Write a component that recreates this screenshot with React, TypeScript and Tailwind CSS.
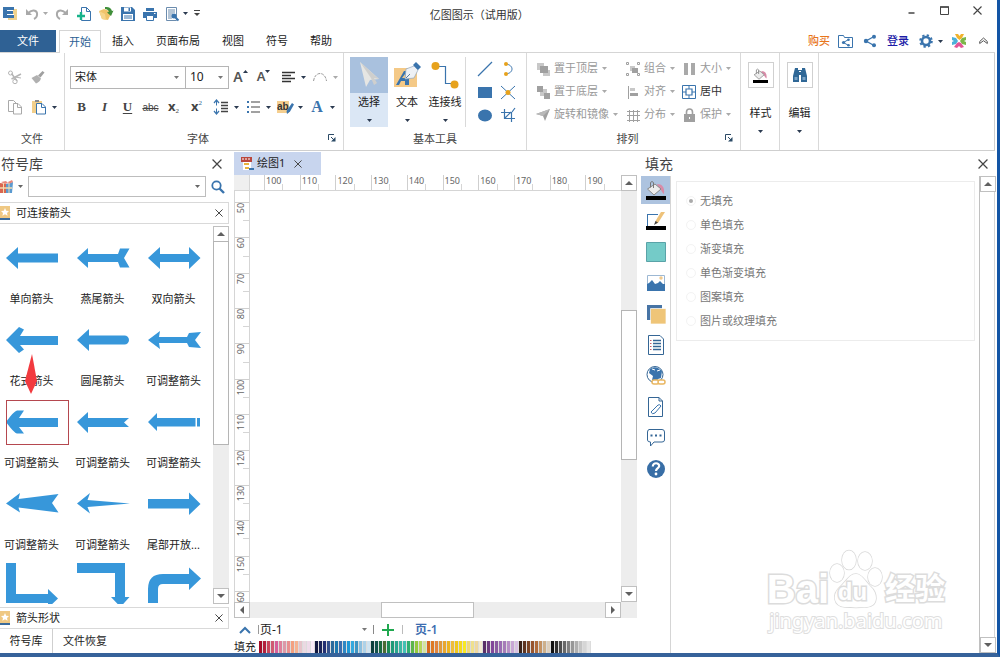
import { useState, type ReactNode } from "react";
import clsx from "clsx";

type IconProps = { w?: number; h?: number; children: ReactNode; className?: string };

function Ico({ w = 16, h = 16, children, className }: IconProps) {
  return (
    <svg width={w} height={h} viewBox={`0 0 ${w} ${h}`} fill="none" className={clsx("shrink-0", className)} aria-hidden="true">
      {children}
    </svg>
  );
}

function Caret({ className = "text-[#2b3a50]" }: { className?: string }) {
  return (
    <Ico w={5} h={3} className={className}>
      <path d="M0 0h5L2.5 3z" fill="currentColor" />
    </Ico>
  );
}

function Close({ size = 9 }: { size?: number }) {
  return (
    <svg width={size} height={size} viewBox="0 0 9 9" fill="none" stroke="#444" strokeWidth="1.1" aria-hidden="true">
      <path d="M.5.5l8 8M8.5.5l-8 8" />
    </svg>
  );
}

function Launcher() {
  return (
    <Ico w={8} h={8}>
      <path d="M.5 6V.5H6" stroke="#2b4a66" />
      <path d="M3 3l3 3" stroke="#2b4a66" />
      <path d="M7.500 3v4.500H3z" fill="#2b4a66" />
    </Ico>
  );
}

const blue = "#3a74ad";

/* ---------- title bar ---------- */

const quickActions = [
  {
    label: "撤销",
    caret: true,
    icon: (
      <>
        <path d="M2 3v6h6z" fill="#a9a9a9" />
        <path d="M4 7.500C7 3.500 12 3.500 13 7c.5 3-1 5-3 6" stroke="#a9a9a9" strokeWidth="2" />
      </>
    ),
  },
  {
    label: "重做",
    icon: (
      <>
        <path d="M14 3v6H8z" fill="#a9a9a9" />
        <path d="M12 7.500C9 3.500 4 3.500 3 7c-.5 3 1 5 3 6" stroke="#a9a9a9" strokeWidth="2" />
      </>
    ),
  },
  {
    label: "新建",
    icon: (
      <>
        <path d="M5.500 1.500h5l4 4v9h-9z" fill="#fff" stroke={blue} />
        <path d="M10.500 1.500v4h4" stroke={blue} />
        <path d="M5 6v8M1 10h8" stroke="#17b38a" strokeWidth="2.400" />
      </>
    ),
  },
  {
    label: "打开",
    icon: (
      <>
        <path d="M1 5l5-2 8 3-4 8-6-1z" fill="#f0c36b" />
        <path d="M7 1c4-.5 6 1 7 4l1.500-.5L13 10 9 6.500l2-.7C10 4 9 3 7 3z" fill="#3f8f3a" />
        <path d="M1 5l6 3 1 6-4-1z" fill="#f5d58c" />
      </>
    ),
  },
  {
    label: "保存",
    icon: (
      <>
        <path d="M1 1h11l3 3v11H1z" fill={blue} />
        <path d="M4 1.500h7v4H4z" fill="#fff" />
        <path d="M8.500 2h1.500v3H8.500z" fill={blue} />
        <path d="M3 8h10v6H3z" fill="#fff" />
        <path d="M4 10h8M4 12h8" stroke={blue} />
      </>
    ),
  },
  {
    label: "打印",
    icon: (
      <>
        <path d="M4 2h8v3H4z" fill={blue} />
        <path d="M1 6h14v6H1z" fill={blue} />
        <path d="M4.500 9.500h7v5h-7z" fill="#fff" stroke={blue} />
        <path d="M12 7.500h1.500" stroke="#fff" />
      </>
    ),
  },
  {
    label: "预览",
    caret: true,
    icon: (
      <>
        <path d="M2.500 1.500h10v13h-10z" fill="#fff" stroke="#6b8cae" />
        <path d="M4 4h7M4 6h7M4 8h5M4 10h4M4 12h4" stroke="#6b8cae" />
        <circle cx="10" cy="10" r="2.500" fill={blue} />
        <path d="M11.500 11.500l3 3" stroke={blue} strokeWidth="2" />
      </>
    ),
  },
];

function TitleBar() {
  return (
    <header className="flex h-[30px] shrink-0 items-start">
      <div className="flex h-[27px] w-[43%] shrink-0 items-center pl-0.5">
        <Ico className="mr-3.5">
          <path d="M6 3h9v11H6z" fill="#f0d28d" />
          <path d="M1 1h11v3H5v1h6v3H5v1h7v3H1z" fill={blue} />
          <path d="M5 4.500h6M5 8.500h7" stroke="#fff" />
        </Ico>
        <div className="-ml-2 flex items-center gap-[6px]">
          {quickActions.map((a) => (
            <button key={a.label} type="button" aria-label={a.label} className="flex items-center gap-[3px]">
              <Ico w={16}>{a.icon}</Ico>
              {a.caret && <Caret className={a.label === "撤销" ? "text-[#aaa]" : undefined} />}
            </button>
          ))}
          <button type="button" aria-label="自定义快速访问工具栏">
            <Ico w={6} h={7}>
              <path d="M0 .5h6" stroke="#444" />
              <path d="M0 3h6L3 6z" fill="#444" />
            </Ico>
          </button>
        </div>
      </div>
      <h1 className="pt-[6px] pl-0.5 text-[11px] leading-[18px] whitespace-nowrap text-[#333]">亿图图示（试用版）</h1>
      <div className="ml-auto flex gap-6 pt-[6px] pr-[13px]">
        <button type="button" aria-label="最小化">
          <Ico w={9} h={9}><path d="M1.500 7h6" stroke="#444" strokeWidth="1.500" /></Ico>
        </button>
        <button type="button" aria-label="最大化">
          <Ico w={9} h={9}><path d="M.5 1h8v7.500h-8z" stroke="#444" /><path d="M0 1h9" stroke="#444" strokeWidth="1.500" /></Ico>
        </button>
        <button type="button" aria-label="关闭"><Close /></button>
      </div>
    </header>
  );
}

/* ---------- tabs ---------- */

const menuTabs = ["开始", "插入", "页面布局", "视图", "符号", "帮助"];

function MenuTabs() {
  const [active, setActive] = useState("开始");
  return (
    <nav className="flex h-[23px] shrink-0 border-b border-[#d5d5d5] text-[11px] text-[#222]">
      <button type="button" className="h-[22px] w-14 bg-[#2f6194] text-white">文件</button>
      <div className="ml-[3px] flex">
        {menuTabs.map((t) => (
          <button
            key={t}
            type="button"
            onClick={() => setActive(t)}
            className={clsx(
              "h-[23px]",
              active === t ? "border-x border-t border-[#d5d5d5] bg-white px-[9px] text-[#2b5f94]" : "px-[11px]",
            )}
          >
            {t}
          </button>
        ))}
      </div>
      <div className="ml-auto flex items-center pr-[7px]">
        <a href="#buy" className="mr-2 font-medium text-[#e8761c]">购买</a>
        <button type="button" aria-label="共享文件夹" className="mr-2">
          <Ico>
            <path d="M.5 14.500v-12h5l1 2h8v10z" stroke={blue} />
            <path d="M10.500 6.500l-5 3 5 3" stroke={blue} />
            <circle cx="5.500" cy="9.500" r="1.600" fill={blue} />
            <circle cx="10.500" cy="6.800" r="1.300" fill={blue} />
            <circle cx="10.500" cy="12.200" r="1.300" fill={blue} />
          </Ico>
        </button>
        <button type="button" aria-label="分享" className="mr-[9px]">
          <Ico>
            <path d="M12 3.500L4 8l8 4.500" stroke={blue} strokeWidth="1.300" />
            <circle cx="4" cy="8" r="2.200" fill={blue} />
            <circle cx="12" cy="3.800" r="2" fill={blue} />
            <circle cx="12" cy="12.200" r="2" fill={blue} />
          </Ico>
        </button>
        <a href="#login" className="mr-[9px] font-medium text-[#1c1ca8]">登录</a>
        <button type="button" aria-label="设置" className="mr-2 flex items-center gap-1">
          <Ico>
            <circle cx="8" cy="8" r="4" stroke={blue} strokeWidth="2.600" />
            <circle cx="8" cy="8" r="5.800" stroke={blue} strokeWidth="2" strokeDasharray="2.280 2.280" />
          </Ico>
          <Caret />
        </button>
        <button type="button" aria-label="工具" className="mr-3">
          <Ico>
            <path d="M4 1h3l1.500 2L10 1h3l-2 4-2.500 2L6 5z" fill="#f1b32c" />
            <path d="M1 4l4 1 2 3-2 3-4 1V9l2-1-2-1z" fill="#4ab0d9" />
            <path d="M15 4l-4 1-2 3 2 3 4 1V9l-2-1 2-1z" fill="#7cb648" />
            <path d="M3 14l3-4 2-1 2 1 3 4-3 1-2-2-2 2z" fill="#e25597" />
          </Ico>
        </button>
        <button type="button" aria-label="折叠功能区">
          <Ico w={9} h={8}><path d="M.7 4.500L4.500 1l3.800 3.500M.7 4.500v2L4.500 3.700l3.800 2.800v-2" stroke="#555" /></Ico>
        </button>
      </div>
    </nav>
  );
}

/* ---------- ribbon ---------- */

function Group({ label, launcher, className, children }: { label: string; launcher?: boolean; className?: string; children: ReactNode }) {
  return (
    <section aria-label={label} className={clsx("relative flex flex-col border-r border-[#d9d9d9]", className)}>
      {children}
      <div className={clsx("mt-auto flex h-[22px] items-center justify-center text-[11px] text-[#444]", launcher && "pr-3")}>
        {label}
      </div>
      {launcher && (
        <button type="button" aria-label={`${label}选项`} className="absolute right-[7px] bottom-2">
          <Launcher />
        </button>
      )}
    </section>
  );
}

function SmallBtn({ label, caret, muted, children }: { label: string; caret?: boolean; muted?: boolean; children: ReactNode }) {
  return (
    <button
      type="button"
      aria-label={label}
      className={clsx("flex h-6 items-center", caret ? "w-8 justify-end gap-[5px] pr-px" : "w-[23px] justify-center")}
    >
      {children}
      {caret && <Caret className={muted ? "text-[#aaa]" : undefined} />}
    </button>
  );
}

function FileGroup() {
  return (
    <Group label="文件" className="w-[65px] pt-3">
      <div className="flex flex-col gap-[6px] pl-[3px]">
        <div className="flex">
          <SmallBtn label="剪切">
            <Ico>
              <path d="M4.500 10L14 5M10 12L4.500 4.500" stroke="#b5b5b5" strokeWidth="1.500" />
              <circle cx="3.500" cy="4" r="2" stroke="#b5b5b5" />
              <circle cx="8" cy="12.500" r="2.200" stroke="#b5b5b5" />
              <path d="M8 8l6 1" stroke="#b5b5b5" />
            </Ico>
          </SmallBtn>
          <SmallBtn label="格式刷">
            <Ico>
              <path d="M12.500 2l2 1.500-4 5-2.500-2z" fill="#a0a0a0" />
              <path d="M7 6l4 3.500c-1 3-3 4-5 5L1.500 9z" fill="#b0b0b0" />
            </Ico>
          </SmallBtn>
        </div>
        <div className="flex">
          <SmallBtn label="复制">
            <Ico>
              <path d="M1.500 1.500h5l3 3v8h-8z" stroke="#a9a9a9" />
              <path d="M6.500 4.500h4.500l3.500 3.500v7h-8z" fill="#fff" stroke="#a9a9a9" />
              <path d="M10.500 4.500v4h4" stroke="#a9a9a9" />
            </Ico>
          </SmallBtn>
          <SmallBtn label="粘贴" caret>
            <Ico>
              <path d="M1 2h10v12H1z" fill="#f2cf8b" />
              <path d="M4 1h4v2H4z" fill="#8a8a8a" />
              <path d="M5.500 4.500h5.500l3.500 3.500v7h-9z" fill="#fff" stroke={blue} />
              <path d="M10.500 4.500v4h4" stroke={blue} />
            </Ico>
          </SmallBtn>
        </div>
      </div>
    </Group>
  );
}

function FontGroup() {
  return (
    <Group label="字体" launcher className="w-[279px] pt-3">
      <div className="flex flex-col gap-[6px] pl-[5px]">
        <div className="flex items-center">
          <div className="relative flex">
            <select
              aria-label="字体名称"
              defaultValue="宋体"
              className="h-[23px] w-[116px] appearance-none border border-[#b5b5b5] bg-white pl-1 text-[11px] text-[#222]"
            >
              <option>宋体</option>
              <option>黑体</option>
            </select>
            <span className="pointer-events-none absolute top-[10px] right-[7px]"><Caret className="text-[#777]" /></span>
          </div>
          <div className="relative -ml-px flex">
            <select
              aria-label="字号"
              defaultValue="10"
              className="h-[23px] w-[44px] appearance-none border border-[#b5b5b5] bg-white pl-1 text-xs text-[#222]"
            >
              <option>10</option>
              <option>12</option>
            </select>
            <span className="pointer-events-none absolute top-[10px] right-[6px]"><Caret className="text-[#777]" /></span>
          </div>
          <SmallBtn label="增大字号">
            <span className="text-sm font-semibold text-[#555]">A</span>
            <span className="mb-3"><Ico w={5} h={3}><path d="M0 3h5L2.500 0z" fill="#2b3a50" /></Ico></span>
          </SmallBtn>
          <SmallBtn label="减小字号">
            <span className="text-[13px] font-semibold text-[#555]">A</span>
            <span className="mb-3"><Caret /></span>
          </SmallBtn>
          <SmallBtn label="对齐方式" caret>
            <Ico><path d="M2 3.500h13M2 6.500h9M2 9.500h13M2 12.500h9" stroke="#333" strokeWidth="1.400" /></Ico>
          </SmallBtn>
          <SmallBtn label="曲线文字" caret muted>
            <Ico><path d="M1.500 12C3 2 13 2 14.500 12" stroke="#999" strokeDasharray="3 1" /></Ico>
          </SmallBtn>
        </div>
        <div className="flex items-center font-['Liberation_Serif','Noto_Sans_CJK_SC',serif] text-[#444]">
          <SmallBtn label="加粗"><b className="text-[13px]">B</b></SmallBtn>
          <SmallBtn label="倾斜"><i className="text-[13px] font-bold">I</i></SmallBtn>
          <SmallBtn label="下划线"><span className="text-[13px] font-bold underline underline-offset-2">U</span></SmallBtn>
          <SmallBtn label="删除线"><s className="font-['Liberation_Sans',sans-serif] text-[10px]">abc</s></SmallBtn>
          <SmallBtn label="下标">
            <span className="font-['Open_Sans',sans-serif] text-[13px] font-bold">x</span>
            <span className="mt-2 text-[7px]">2</span>
          </SmallBtn>
          <SmallBtn label="上标">
            <span className="font-['Open_Sans',sans-serif] text-[13px] font-bold">x</span>
            <span className="mb-2 text-[7px] text-[#2b5f94]">2</span>
          </SmallBtn>
          <SmallBtn label="行距" caret>
            <Ico>
              <path d="M3.500 1.500v5M3.500 9.500v5" stroke={blue} />
              <path d="M1 4l2.500-3L6 4M1 12l2.500 3L6 12" stroke={blue} strokeWidth="1.200" />
              <path d="M8 3.500h7M8 6.500h7M8 9.500h7M8 12.500h7" stroke="#444" strokeWidth="1.300" />
            </Ico>
          </SmallBtn>
          <SmallBtn label="项目符号" caret>
            <Ico>
              <path d="M2 2h2v2H2zM2 7h2v2H2zM2 12h2v2H2z" fill={blue} />
              <path d="M6 3h9M6 8h9M6 13h9" stroke="#444" strokeWidth="1.200" />
            </Ico>
          </SmallBtn>
          <SmallBtn label="突出显示" caret>
            <span className="relative flex w-4">
              <span className="bg-[#f5cf90] font-['Liberation_Sans',sans-serif] text-[10px] leading-3 font-bold text-[#333]">ab</span>
              <Ico w={9} h={12} className="absolute top-0.5 left-2">
                <path d="M7 0l2 1.500-4 7-3 2.500-.5-3z" fill={blue} />
              </Ico>
            </span>
          </SmallBtn>
          <SmallBtn label="字体颜色" caret><b className="w-4 text-center text-base text-[#3a74ad]">A</b></SmallBtn>
        </div>
      </div>
    </Group>
  );
}

function BigTool({ label, selected, children }: { label: string; selected?: boolean; children: ReactNode }) {
  return (
    <button
      type="button"
      aria-pressed={!!selected}
      className={clsx("flex h-[70px] w-[38px] flex-col items-center text-[11px] text-[#222]", selected && "bg-[#dbe7f5]")}
    >
      <span className={clsx("flex h-9 w-full items-center justify-center", selected && "bg-[#a9c1de]")}>{children}</span>
      <span className="leading-[18px] whitespace-nowrap">{label}</span>
      <span className="mt-2"><Caret /></span>
    </button>
  );
}

const drawTools = [
  { label: "直线", icon: <path d="M1 15L15 1" stroke={blue} strokeWidth="1.200" /> },
  {
    label: "弧线",
    icon: (
      <>
        <path d="M6 3c8 1 8 9 0 10" stroke={blue} />
        <circle cx="6" cy="3" r="2" fill="#e7a21c" />
        <circle cx="6" cy="13" r="2" fill="#e7a21c" />
      </>
    ),
  },
  { label: "矩形", icon: <path d="M1 3h14v11H1z" fill={blue} /> },
  {
    label: "连接点",
    icon: (
      <>
        <path d="M1 2l14 13M15 2L1 15" stroke={blue} />
        <circle cx="8" cy="8.500" r="2.500" fill="#e7a21c" />
      </>
    ),
  },
  { label: "椭圆", icon: <ellipse cx="8" cy="8.500" rx="7" ry="6" fill={blue} /> },
  {
    label: "裁剪",
    icon: <path d="M4.500 2v9.500H15M1 5.500h10.500V15M12 5L15 1M5 11l6-6" stroke={blue} strokeWidth="1.200" />,
  },
];

function ToolsGroup() {
  return (
    <Group label="基本工具" className="w-[183px] pt-1">
      <div className="flex pl-[6px]">
        <BigTool label="选择" selected>
          <Ico w={28} h={30}>
            <path d="M5 2l19 17-9 1-4 7z" fill="#e6e6e3" />
            <path d="M5 2l11 16 3 7 3-2-3-5 5 1z" fill="#cfcfcd" />
          </Ico>
        </BigTool>
        <BigTool label="文本">
          <Ico w={28} h={30}>
            <path d="M1 8h23v19H1z" fill="#f4c987" />
            <path d="M3 25L11 11h5v14h-4v-4H8l-2 4z" fill={blue} />
            <path d="M9 18h3v-4z" fill="#f4c987" />
            <path d="M12 19l1-10 8-3 4 4-4 8z" fill="#eef1f5" stroke="#8fa5bd" strokeWidth=".7" />
            <path d="M20 5l3-3 5 5-3 3z" fill={blue} />
            <path d="M13 18l4-4" stroke="#5c7da0" />
          </Ico>
        </BigTool>
        <BigTool label="连接线">
          <Ico w={28} h={30}>
            <path d="M5 6.500h9.500v17H23" stroke={blue} strokeWidth="1.200" />
            <circle cx="4.500" cy="6" r="4" fill="#e7a21c" />
            <circle cx="23.500" cy="24.500" r="4" fill="#e7a21c" />
          </Ico>
        </BigTool>
        <div className="ml-px h-[70px] border-l border-[#d9d9d9] pl-[7px]">
          <div className="grid auto-rows-[23px] grid-cols-2">
            {drawTools.map((t) => (
              <SmallBtn key={t.label} label={t.label}><Ico>{t.icon}</Ico></SmallBtn>
            ))}
          </div>
        </div>
      </div>
    </Group>
  );
}

const g1 = "#a0a0a0";
const g2 = "#c8c8c8";

const arrangeTools = [
  { label: "置于顶层", icon: <><path d="M1 1h7v7H1zM7 8h7v6H7z" fill={g2} /><path d="M4 4h8v7H4z" fill={g1} /></> },
  { label: "组合", icon: <><path d="M4 4h5v5H4z" fill={g2} /><path d="M6 6h6v5H6z" fill={g1} /><path d="M.5.5h2v2h-2zM11.500.5h2v2h-2zM.5 11.500h2v2h-2zM11.500 11.500h2v2h-2z" stroke={g1} /></> },
  { label: "大小", icon: <path d="M2 1h4v12H2zM9 1h4v12H9z" fill="#a9a9a9" /> },
  { label: "置于底层", icon: <><path d="M4 4h7v7H4z" fill={g2} /><path d="M1 1h6v6H1zM8 8h6v6H8z" fill={g1} /></> },
  { label: "对齐", icon: <><path d="M2.500 1v13" stroke={g1} /><path d="M4 3h5v3H4z" fill={g2} /><path d="M4 8h8v3H4z" fill={g1} /></> },
  { label: "居中", on: true, icon: <><path d="M.5.5h13v13H.5zM7 .5V4M7 10v3.500M.5 7H4M10 7h3.500" stroke={blue} /><path d="M4 4h6v6H4z" stroke={blue} strokeWidth="1.200" /></> },
  { label: "旋转和镜像", icon: <><path d="M0 6L14 1 9 13 7 8z" fill={g1} /><path d="M0 6l14-5-7 7z" fill="#b9b9b9" /></> },
  { label: "分布", icon: <path d="M1 3.500h13M1 7.500h13M1 12.500h13M3.500 2v12M7.500 2v12M11.500 2v12" stroke={g1} /> },
  { label: "保护", icon: <><path d="M2 6h11v8H2z" fill={g1} /><path d="M4.500 6V4a3 3 0 016 0v2" stroke={g1} strokeWidth="1.600" /><path d="M7.500 9v2" stroke="#fff" /></> },
];

function ArrangeGroup() {
  return (
    <Group label="排列" launcher className="w-[214px] pt-1">
      <div className="grid auto-rows-[23px] grid-cols-[90px_56px_auto] pl-[9px]">
        {arrangeTools.map((t) => (
          <button
            key={t.label}
            type="button"
            className={clsx("flex items-center gap-1 text-[11px] whitespace-nowrap", t.on ? "text-[#333]" : "text-[#999]")}
          >
            <Ico w={14} h={14}>{t.icon}</Ico>
            {t.label}
            {!t.on && <Caret className="text-[#aaa]" />}
          </button>
        ))}
      </div>
    </Group>
  );
}

function BucketIcon({ size = 20 }: { size?: number }) {
  return (
    <svg width={size} height={size} viewBox="0 0 20 20" fill="none" aria-hidden="true">
      <path d="M11 4c5 0 8 3 7 10-2-1-2-4-5-5z" fill="#d98ba8" />
      <path d="M1.500 9L9 4l6 5-7 6z" fill="#ececec" stroke="#888" />
      <path d="M4.500 7.500V2.500q1.500-2 3 0V8" stroke="#777" />
      <path d="M0 16h20v4H0z" fill="#000" />
    </svg>
  );
}

function BoxTool({ label, children }: { label: string; children: ReactNode }) {
  return (
    <div className="w-[39px] border-r border-[#d9d9d9] pl-px">
      <button type="button" className="mx-auto flex flex-col items-center pt-[9px] text-[11px] text-[#222]">
        <span className="flex size-[26px] items-center justify-center border border-[#d0d0d0]">{children}</span>
        <span className="mt-4 leading-[18px]">{label}</span>
        <span className="mt-2"><Caret /></span>
      </button>
    </div>
  );
}

function Ribbon() {
  return (
    <div className="flex h-[98px] shrink-0 border-r border-b border-[#cfcfcf]">
      <FileGroup />
      <FontGroup />
      <ToolsGroup />
      <ArrangeGroup />
      <BoxTool label="样式"><BucketIcon size={15} /></BoxTool>
      <BoxTool label="编辑">
        <Ico>
          <path d="M3 1h3v2h4V1h3l2 8v6H9V8H7v7H1V9z" fill="#2f6796" />
          <path d="M2.500 10h3v3h-3zM10.500 10h3v3h-3z" fill="#7aa3c6" />
          <path d="M7 4.500h2" stroke="#fff" />
        </Ico>
      </BoxTool>
    </div>
  );
}

/* ---------- scrollbars ---------- */

function ScrollBtn({ dir }: { dir: "up" | "down" | "left" | "right" }) {
  const d = {
    up: "M0 6h8L4 2z",
    down: "M0 2h8L4 6z",
    left: "M6 0v8L2 4z",
    right: "M2 0v8l4-4z",
  }[dir];
  const names = { up: "向上滚动", down: "向下滚动", left: "向左滚动", right: "向右滚动" };
  return (
    <button type="button" aria-label={names[dir]} className="flex size-4 shrink-0 items-center justify-center border border-[#c0c0c0] bg-white">
      <Ico w={8} h={8}><path d={d} fill="#606060" /></Ico>
    </button>
  );
}

/* ---------- symbol library ---------- */

type Shape = { name: string; d: string; short?: string; bare?: boolean };

const shapes: Shape[] = [
  { name: "单向箭头", d: "M0 20L12 9v6.500h40v9H12V31z" },
  { name: "燕尾箭头", d: "M0 20L11 10v6h30l2-5.500h9.500L47 20l5.500 9.500H43L41 24H11v6z" },
  { name: "双向箭头", d: "M0 20L12 9v7h29V9l11.500 11L41 31v-7H12v7z" },
  { name: "花式箭头", d: "M0 20L13 7l5 2.500L14 16h38v9H14l4 4.500L13 33z" },
  { name: "圆尾箭头", d: "M0 20L12 9v6.500h35.500a4.500 4.500 0 010 9H12V31z" },
  { name: "可调整箭头", d: "M0 20L12 11l-1 6h28l2-4 12-1-6 8 6 8-12-1-2-4H11l1 6z" },
  { name: "可调整箭头", d: "M0 20Q8 9 11 8.500h7L13 16h39v9H13l5 6.500h-7Q8 31 0 20z" },
  { name: "可调整箭头", d: "M0 20L11 10v6h41l-5 4.500 5 4.500H11v6z" },
  { name: "可调整箭头", d: "M0 20L9 11v5h38.500v8.500H9V29zM49 16h3v8.500h-3z" },
  { name: "可调整箭头", d: "M0 19.500L14 9l-1.500 6L52.500 10 46 19l6.500 9.500-40-5L14 28.500z" },
  { name: "可调整箭头", d: "M0 19.500L13 9l-2.500 7L53 19.500 10.500 23 13 29.500z" },
  { name: "尾部开放箭头", short: "尾部开放...", d: "M0 15h41V8.500L52.500 20 41 31v-6.500H0z" },
  { name: "直角箭头", bare: true, d: "M0-3h10v31h32v-5l10 9.500-10 9.500v-5H0z" },
  { name: "直角箭头", bare: true, d: "M0-3h48v34h4.500L43.500 41 34 31h4V7H0z" },
  { name: "圆角箭头", bare: true, d: "M0 37V23Q0 8 15 8h26V1.500L53 12.500 41 24v-6H15q-5 0-5 5v14z" },
];

function CategoryBar({ title }: { title: string }) {
  return (
    <div className="flex h-[22px] shrink-0 items-center border-y border-r border-[#d9d9d9] text-[11px] text-[#222]">
      <Ico w={10} h={14} className="mr-[6px]">
        <path d="M0 0h10v14H0z" fill="#efc883" />
        <path d="M0 12h10v2H0z" fill="#3a6b9c" />
        <path d="M5 2l1.200 2.800 2.800.2-2 2 .6 2.800L5 8.300 2.400 9.800 3 7 1 5l2.800-.2z" fill="#fff" />
      </Ico>
      {title}
      <button type="button" aria-label={`关闭${title}`} className="mr-[5px] ml-auto"><Close size={8} /></button>
    </div>
  );
}

function SymbolPanel() {
  const [selected, setSelected] = useState(6);
  return (
    <aside className="flex w-[229px] shrink-0 flex-col">
      <div className="flex h-[25px] shrink-0 items-center justify-between pr-[7px]">
        <h2 className="pl-px text-sm leading-5 text-[#444]">符号库</h2>
        <button type="button" aria-label="关闭符号库"><Close size={10} /></button>
      </div>
      <div className="flex h-[21px] shrink-0 items-center">
        <button type="button" aria-label="符号分类" className="flex items-center gap-1">
          <Ico w={14} h={14}>
            <path d="M0 3l6 1v9H0z" fill="#d9664f" />
            <path d="M6 4l7-2-1 11H6z" fill="#5b9ad0" />
            <path d="M1 2l5-1 2 2-3 1zM8 2l4-2 1 2-4 2z" fill="#e8877a" />
            <path d="M0 8h12" stroke="#f3dcae" strokeWidth="1.500" />
            <path d="M3.500 3v10M9 3v10" stroke="#f3dcae" />
          </Ico>
          <Caret className="text-[#666]" />
        </button>
        <div className="ml-[5px] flex h-[21px] flex-1 items-center border border-[#bdbdbd] pr-[5px]">
          <input aria-label="搜索符号" className="h-full min-w-0 flex-1 px-1 text-[11px] outline-none" />
          <Caret className="text-[#666]" />
        </div>
        <button type="button" aria-label="搜索" className="mr-1 ml-[5px]">
          <Ico w={14} h={14}>
            <circle cx="5.500" cy="5.500" r="4.200" stroke={blue} strokeWidth="1.800" />
            <path d="M8.500 8.500L13 13" stroke={blue} strokeWidth="2.400" />
          </Ico>
        </button>
      </div>
      <div className="mt-[5px]"><CategoryBar title="可连接箭头" /></div>
      <div className="mt-0.5 flex min-h-0 flex-1">
        <div className="-ml-1 grid flex-1 auto-rows-[82px] grid-cols-[repeat(3,71px)] overflow-hidden pt-3">
          {shapes.map((s, i) => (
            <button
              key={i}
              type="button"
              aria-label={s.name}
              onClick={() => setSelected(i)}
              className="relative flex flex-col items-center gap-3 text-[11px] text-[#222]"
            >
              <svg width="52" height="40" viewBox="0 0 52 40" className="shrink-0 overflow-visible" aria-hidden="true">
                <path d={s.d} fill="#3797da" />
              </svg>
              {!s.bare && <span className="leading-[18px] whitespace-nowrap">{s.short ?? s.name}</span>}
              {selected === i && <span className="absolute -top-[2px] left-[10px] h-[45px] w-[63px] border border-[#b5484f]" />}
              {i === 3 && (
                <Ico w={12} h={40} className="absolute top-[34px] left-[29px]">
                  <path d="M7 0l5 27-6 13-6-13z" fill="#f23a3f" />
                </Ico>
              )}
            </button>
          ))}
        </div>
        <div className="flex w-4 shrink-0 flex-col bg-[#ededed]">
          <ScrollBtn dir="up" />
          <div className="-mt-px h-[54%] border border-[#b5b5b5] bg-white" />
          <div className="mt-auto"><ScrollBtn dir="down" /></div>
        </div>
      </div>
      <div className="mt-[3px]"><CategoryBar title="箭头形状" /></div>
      <div className="flex h-6 shrink-0 items-center text-[11px] text-[#222]">
        <button type="button" className="h-full w-[53px] border-r border-[#cfcfcf]">符号库</button>
        <button type="button" className="px-[10px]">文件恢复</button>
      </div>
    </aside>
  );
}

/* ---------- canvas ---------- */

const hMarks = [100, 110, 120, 130, 140, 150, 160, 170, 180, 190];
const vMarks = [50, 60, 70, 80, 90, 100, 110, 120, 130, 140, 150];

const palette = [
  "#a30d28", "#b3203c", "#c8465c", "#cf5a72", "#d6609a", "#de809a", "#dc98a8", "#e88f90", "#f3a080", "#f6b292", "#e6c3ca", "#ebd9e2", "#efdbea", "#f7eaf7",
  "#12183f", "#1a2358", "#232f72", "#35508c", "#2a6a9c", "#1c78ae", "#3a6cae", "#2f87c4", "#1f98d6", "#35a8de", "#3f96c4", "#8bbfdf", "#aed2e8", "#cfe3f0",
  "#0d3f3b", "#14524a", "#1b6a3e", "#4b6b34", "#1d8a54", "#1f9a78", "#2aa58e", "#3cb6a4", "#43c0b4", "#2fae72", "#5cb54a", "#94c83e", "#b6d65a", "#d3e4a0",
  "#d4691e", "#dd7a24", "#e0853e", "#e09a3c", "#e8a72e", "#ecb422", "#eebd3a", "#f0c61e", "#f5d81c", "#f8e822", "#efd876", "#efe08e", "#eed8a0", "#f4ead0",
  "#5a2f66", "#6e3c80", "#82489a", "#8a5ca0", "#9a6cb2", "#a67cb8", "#b78fc6", "#c8a8d4", "#d9c2e2",
  "#3a2218", "#5e3420", "#7c4526", "#98552e", "#b06c3c", "#c49262", "#cdb08c", "#ddd0be",
  "#101010", "#303030", "#4c4c4c", "#686868", "#808080", "#989898", "#b0b0b0", "#c4c4c4", "#d6d6d6", "#e6e6e6",
];

function CanvasPanel() {
  return (
    <main className="ml-[5px] flex min-w-0 flex-1 flex-col">
      <div className="mt-px flex h-[23px] w-[87px] shrink-0 items-center bg-[#c8d5ee] pl-[6px] text-[11px] text-[#222]">
        <Ico w={15} h={15}>
          <path d="M1 1h11v5H1z" fill="#b9473d" />
          <path d="M2 3h9" stroke="#fff" strokeDasharray="2 1" />
          <path d="M3 6h8v8H3z" fill="#fff" />
          <path d="M4 7h5v2H4zM5 11h4v2H5z" fill="#e7b23c" />
          <path d="M9 12h5v2H9z" fill={blue} />
        </Ico>
        <span className="ml-0.5 whitespace-nowrap">绘图1</span>
        <button type="button" aria-label="关闭绘图1" className="ml-[9px]"><Close size={8} /></button>
      </div>
      <div className="flex min-h-0 flex-1">
        <div className="flex min-w-0 flex-1 flex-col">
          <div className="flex h-4 shrink-0 border-b border-[#d5d5d5] font-['Noto_Sans',sans-serif] text-[9px] leading-3 text-[#666]">
            <div className="w-4 shrink-0 border-r border-[#d5d5d5] bg-[#efefef]" />
            <div className="w-[14px] shrink-0" />
            {hMarks.map((n) => (
              <div key={n} className="flex min-w-0 flex-1 items-end border-l border-[#cfcfcf]">
                <span className="w-1/2 self-start pl-px">{n}</span>
                <span className="h-1.5 border-l border-[#d5d5d5]" />
              </div>
            ))}
          </div>
          <div className="flex min-h-0 flex-1">
            <div className="flex w-4 shrink-0 flex-col overflow-hidden border-x border-[#d5d5d5] font-['Noto_Sans',sans-serif] text-[9px] leading-3 text-[#666]">
              <div className="h-[11px] shrink-0" />
              {vMarks.map((n) => (
                <div key={n} className="flex min-h-0 flex-1 flex-col items-end border-t border-[#cfcfcf]">
                  <span className="h-1/2 rotate-180 self-start text-right [writing-mode:vertical-rl]">{n}</span>
                  <span className="w-1.5 border-t border-[#d5d5d5]" />
                </div>
              ))}
              <div className="h-[11px] shrink-0 border-t border-[#cfcfcf]">
                <span className="block rotate-180 [writing-mode:vertical-rl]">60</span>
              </div>
            </div>
            <div className="flex-1 bg-white" />
          </div>
          <div className="flex h-4 shrink-0 bg-[#ededed]">
            <ScrollBtn dir="left" />
            <div className="flex flex-1"><div className="ml-[37%] w-[26%] border border-[#c0c0c0] bg-white" /></div>
            <ScrollBtn dir="right" />
          </div>
        </div>
        <div className="flex w-4 shrink-0 flex-col bg-[#ededed] pb-4">
          <ScrollBtn dir="up" />
          <div className="flex min-h-0 flex-1 flex-col">
            <div className="h-[30%]" />
            <div className="h-[38%] border border-[#b5b5b5] bg-white" />
          </div>
          <ScrollBtn dir="down" />
        </div>
      </div>
      <div className="flex h-[22px] shrink-0 items-center pt-px text-xs text-[#222]">
        <button type="button" aria-label="展开页面列表" className="mr-[7px] ml-[5px]">
          <Ico w={12} h={8}><path d="M1 7l5-5 5 5" stroke={blue} strokeWidth="2" /></Ico>
        </button>
        <span className="h-[9px] border-l border-[#999]" />
        <div className="relative flex w-[108px]">
          <select aria-label="页面" defaultValue="页-1" className="h-[18px] w-full appearance-none bg-white pl-px text-xs">
            <option>页-1</option>
          </select>
          <span className="pointer-events-none absolute top-[7px] right-0"><Caret className="text-[#777]" /></span>
        </div>
        <span className="ml-[6px] h-[9px] border-l border-[#888]" />
        <button type="button" aria-label="添加页面" className="mx-2">
          <Ico w={12} h={12}><path d="M6 0v12M0 6h12" stroke="#1fa84f" strokeWidth="2" /></Ico>
        </button>
        <span className="h-[9px] border-l border-[#bbb]" />
        <button type="button" className="ml-3 font-semibold text-[#3d6db0]">页-1</button>
      </div>
      <div className="flex h-[13px] shrink-0 items-center text-[11px] leading-[13px] text-[#222]">
        <span className="mr-[3px] shrink-0">填充</span>
        <div className="flex h-3">
          {palette.map((c, i) => (
            <button key={i} type="button" aria-label={c} className="w-1 border-r border-[#dcdcdc]" style={{ backgroundColor: c }} />
          ))}
        </div>
      </div>
    </main>
  );
}

/* ---------- fill panel ---------- */

const sideTools = [
  { label: "填充", icon: <BucketIcon /> },
  {
    label: "线条",
    icon: (
      <Ico w={20} h={20}>
        <path d="M1 3.500h11M1.500 3v12" stroke={blue} />
        <path d="M0 15h20v4H0z" fill="#000" />
        <path d="M15 1h4L12 12l-3 1 .5-3z" fill="#eec27a" />
        <path d="M9.500 10l-1.500 4 4-2.500z" fill="#444" />
      </Ico>
    ),
  },
  { label: "阴影", icon: <Ico w={20} h={20}><path d="M.5.5h19v19H.5z" fill="#74cbc8" stroke="#5aa3a8" /></Ico> },
  {
    label: "图片",
    icon: (
      <Ico w={20} h={20}>
        <path d="M1.500 2.500h17v15h-17z" fill="#fff" stroke="#9db8d3" />
        <path d="M1 18V11l2-1 3-3 3 4 3-1 2-2 3 3 2 0v7z" fill={blue} />
        <circle cx="15" cy="5" r="1.700" fill="#f0c98c" />
      </Ico>
    ),
  },
  { label: "图层", icon: <Ico w={20} h={20}><path d="M1 1h15v15H1z" fill="#4774a5" /><path d="M4.500 4.500H20V20H4.500z" fill="#efc578" stroke="#fff" strokeWidth=".7" /></Ico> },
  {
    label: "页面属性",
    icon: (
      <Ico w={20} h={20}>
        <path d="M2.500.5H14l3.500 3.500v15.500h-15z" fill="#fff" stroke="#356695" />
        <path d="M7 5.500h8M7 8.500h8M7 11.500h8M7 14.500h8" stroke="#356695" strokeWidth="1.400" />
        <path d="M4 5.500h1.500M4 8.500h1.500M4 11.500h1.500M4 14.500h1.500" stroke="#c25a6a" />
      </Ico>
    ),
  },
  {
    label: "超链接",
    icon: (
      <Ico w={20} h={20}>
        <circle cx="9" cy="8.500" r="8" fill="#fff" stroke="#356695" />
        <path d="M4 3q4-3 8-1l4 3-1 7-3 1-2 3-4-2 1-4-4-3z" fill={blue} />
        <path d="M6 3l3 1M11 5l3-1" stroke="#fff" />
        <rect x="6" y="14" width="7" height="4" rx="2" fill="#fff" stroke="#e9b661" strokeWidth="1.500" />
        <rect x="12" y="14" width="7" height="4" rx="2" fill="#fff" stroke="#e9b661" strokeWidth="1.500" />
      </Ico>
    ),
  },
  {
    label: "附件",
    icon: (
      <Ico w={20} h={20}>
        <path d="M2.500.5H13L16.500 4v15.500h-14z" fill="#fff" stroke="#356695" />
        <path d="M13 .5V4h3.500" stroke="#356695" />
        <path d="M5 15l7-7q2-1 3 1l-6 7q-3 2-4-1l6-6" stroke={blue} />
      </Ico>
    ),
  },
  {
    label: "注释",
    icon: (
      <Ico w={20} h={20}>
        <path d="M3 1.500h13q2.500 0 2.500 2.500v8q0 2-2.500 2H8l-3.500 4V14Q1.500 14 1.500 12V4q0-2.500 2-2.500z" fill="#fff" stroke="#356695" />
        <path d="M4.500 7.500h2M9 7.500h2M13.500 7.500h2" stroke="#356695" strokeWidth="2" />
      </Ico>
    ),
  },
  {
    label: "帮助",
    icon: (
      <Ico w={20} h={20}>
        <circle cx="10" cy="10" r="9" fill="#386ea6" />
        <path d="M6.800 7.500c0-4.500 6.700-4 6.400-.3-.2 2-3.200 2-3.200 4.800" stroke="#fff" strokeWidth="2.200" />
        <circle cx="10" cy="15" r="1.400" fill="#fff" />
      </Ico>
    ),
  },
];

const fillOptions = ["无填充", "单色填充", "渐变填充", "单色渐变填充", "图案填充", "图片或纹理填充"];

function FillPanel() {
  const [fill, setFill] = useState("无填充");
  return (
    <aside className="ml-1 flex w-[354px] shrink-0 flex-col">
      <div className="flex h-[25px] shrink-0 items-center justify-between pr-[7px] pl-1">
        <h2 className="text-sm leading-5 text-[#444]">填充</h2>
        <button type="button" aria-label="关闭填充面板"><Close size={10} /></button>
      </div>
      <div className="flex min-h-0 flex-1">
        <div className="flex w-[30px] shrink-0 flex-col gap-[3px] border-r border-[#d5d5d5]">
          {sideTools.map((t, i) => (
            <button
              key={t.label}
              type="button"
              aria-label={t.label}
              className={clsx("flex h-7 w-full items-center justify-center", i === 0 && "bg-[#adc3df]")}
            >
              {t.icon}
            </button>
          ))}
        </div>
        <div className="relative min-w-0 flex-1 pt-[5px] pr-1 pl-[5px]">
          <fieldset className="flex flex-col border border-[#ececec] px-[9px] py-[7px]">
            {fillOptions.map((o) => (
              <label key={o} className="flex h-6 items-center gap-1 text-[11px] text-[#777]">
                <input
                  type="radio"
                  name="fill"
                  checked={fill === o}
                  onChange={() => setFill(o)}
                  className="flex size-[10px] appearance-none items-center justify-center rounded-full border border-[#f3f3f3] checked:before:size-1 checked:before:rounded-full checked:before:bg-[#aaa]"
                />
                {o}
              </label>
            ))}
          </fieldset>
          <div className="pointer-events-none absolute right-[34px] bottom-5 flex flex-col items-center text-white select-none [paint-order:stroke_fill]">
            <div className="relative flex items-end font-['Liberation_Sans','Noto_Sans_CJK_SC',sans-serif] font-bold [-webkit-text-stroke:3px_#dcdcdc]">
              <span className="text-[40px] leading-10">Bai</span>
              <svg width="54" height="60" viewBox="0 0 54 60" fill="#fff" stroke="#d9d9d9" strokeWidth="1.500" aria-hidden="true">
                <ellipse cx="8" cy="24" rx="7" ry="9" />
                <ellipse cx="20" cy="11" rx="7" ry="9.500" />
                <ellipse cx="36" cy="12" rx="7" ry="9" />
                <ellipse cx="46" cy="28" rx="7" ry="9" />
                <path d="M27 25c6 0 9 7 14 12 8 7 9 20-3 21-6 .5-16 .5-22 0C4 57 3 45 11 38c6-5 9-13 16-13z" />
              </svg>
              <span className="absolute bottom-[3px] left-[71px] text-2xl leading-7">du</span>
              <span className="ml-0.5 text-[30px] leading-10">经验</span>
            </div>
            <span className="font-['Noto_Sans',sans-serif] text-xl leading-6 [-webkit-text-stroke:2px_#dedede]">jingyan.baidu.com</span>
          </div>
        </div>
        <div className="flex w-4 shrink-0 flex-col border-l border-[#c0c0c0]">
          <ScrollBtn dir="up" />
          <div className="flex-1 border-r border-[#d5d5d5]" />
          <ScrollBtn dir="down" />
        </div>
      </div>
    </aside>
  );
}

export default function App() {
  return (
    <div className="flex h-screen flex-col overflow-hidden border-r-[3px] border-b-4 border-r-[#1355a5] border-b-[#36629a] bg-white pr-[2px] font-['Noto_Sans','Noto_Sans_CJK_SC',sans-serif]">
      <TitleBar />
      <MenuTabs />
      <Ribbon />
      <div className="flex min-h-0 flex-1">
        <SymbolPanel />
        <CanvasPanel />
        <FillPanel />
      </div>
    </div>
  );
}
